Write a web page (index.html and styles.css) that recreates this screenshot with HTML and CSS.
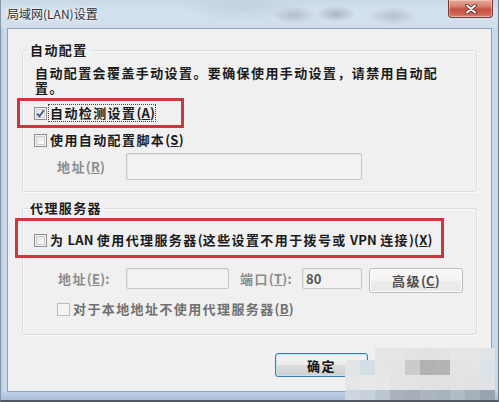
FILE: index.html
```html
<!DOCTYPE html>
<html lang="zh-CN">
<head>
<meta charset="utf-8">
<title>局域网(LAN)设置</title>
<link rel="stylesheet" href="styles.css">
</head>
<body>
<div class="window">
  <div class="titlebar">
    <span class="title">局域网(LAN)设置</span>
    <span class="close">
      <svg width="12" height="10" viewBox="0 0 12 10">
        <path d="M2 1.5 L10 8.5 M10 1.5 L2 8.5" stroke="#4a2a26" stroke-width="3.6" stroke-linecap="round"/>
        <path d="M2 1.5 L10 8.5 M10 1.5 L2 8.5" stroke="#ffffff" stroke-width="2" stroke-linecap="round"/>
      </svg>
    </span>
  </div>
  <div class="client">
    <fieldset class="group group-auto">
      <legend>自动配置</legend>
      <p class="desc">自动配置会覆盖手动设置。要确保使用手动设置，请禁用自动配置。</p>
      <div class="check-row row-detect">
        <span class="cb">
          <svg class="tick" width="9" height="9" viewBox="0 0 9 9">
            <path d="M1.2 4.6 L3.5 7.2 L7.8 1.4" fill="none" stroke="#3e5a96" stroke-width="1.8"/>
          </svg>
        </span>
        <span class="label focus">自动检测设置<span class="lat">(<u>A</u>)</span></span>
      </div>
      <div class="check-row row-script">
        <span class="cb"></span>
        <span class="label">使用自动配置脚本<span class="lat">(<u>S</u>)</span></span>
      </div>
      <div class="field-row row-script-addr">
        <span class="field-label disabled lbl-script">地址<span class="lat">(<u>R</u>)</span></span>
        <span class="textbox tb-script"></span>
      </div>
    </fieldset>
    <fieldset class="group group-proxy">
      <legend>代理服务器</legend>
      <div class="check-row row-proxy">
        <span class="cb"></span>
        <span class="label">为<span class="lat"> LAN </span>使用代理服务器<span class="lat">(</span>这些设置不用于拨号或<span class="lat"> VPN </span>连接<span class="lat">)(<u>X</u>)</span></span>
      </div>
      <div class="field-row row-proxy-addr">
        <span class="field-label disabled lbl-addr">地址<span class="lat">(<u>E</u>):</span></span>
        <span class="textbox tb-addr"></span>
        <span class="field-label disabled lbl-port">端口<span class="lat">(<u>T</u>):</span></span>
        <span class="textbox tb-port">80</span>
        <button class="btn btn-adv">高级<span class="lat">(<u>C</u>)</span></button>
      </div>
      <div class="check-row row-bypass">
        <span class="cb cb-disabled"></span>
        <span class="label label-disabled">对于本地地址不使用代理服务器<span class="lat">(<u>B</u>)</span></span>
      </div>
    </fieldset>
    <div class="footer">
      <button class="btn btn-ok">确定</button>
    </div>
  </div>
  <div class="mark mark-detect"></div>
  <div class="mark mark-proxy"></div>
  <div class="mosaic">
    <div class="mrow mrow-1"></div>
    <div class="mrow mrow-2"></div>
    <div class="mrow mrow-3"></div>
    <div class="mrow mrow-4"></div>
  </div>
</div>
</body>
</html>
```

FILE: styles.css
```css
* { box-sizing: border-box; }

html, body {
  margin: 0;
  padding: 0;
  background: #c3d6ea;
}

body {
  font-family: "Noto Sans CJK SC", "Noto Sans", sans-serif;
  font-size: 13px;
  color: #1b1b1b;
}

.window {
  position: relative;
  width: 499px;
  height: 402px;
  overflow: hidden;
  display: flex;
  flex-direction: column;
  border-left: 1px solid #8797a8;
  border-right: 1px solid #6f8093;
  border-bottom: 2px solid #4f5863;
  background:
    linear-gradient(to bottom, rgba(255,255,255,0) 0, rgba(255,255,255,0) 392px, #bcd0e6 392px, #a9bfd8 400px),
    linear-gradient(to right, #b6cbe2 0, #c7daee 3px, #c5d8ec 100%);
}

/* ---------- title bar ---------- */
.titlebar {
  height: 28px;
  flex: none;
  display: flex;
  align-items: flex-start;
  background:
    radial-gradient(ellipse 22px 9px at 293px 15px, rgba(150,160,172,0.55), rgba(150,160,172,0)),
    radial-gradient(ellipse 20px 8px at 335px 14px, rgba(140,150,162,0.6), rgba(140,150,162,0)),
    radial-gradient(ellipse 24px 9px at 392px 16px, rgba(150,160,170,0.5), rgba(150,160,170,0)),
    radial-gradient(ellipse 60px 14px at 240px 8px, rgba(170,185,200,0.35), rgba(170,185,200,0)),
    linear-gradient(to bottom, #c9d8e7 0, #d4e1ee 40%, #d0deec 100%);
}

.title {
  margin: 6px 0 0 6px;
  font-size: 12px;
  line-height: 16px;
  color: #2e2e2e;
  text-shadow: 0 0 5px rgba(255,255,255,0.95), 0 0 2px rgba(255,255,255,0.9);
}

.close {
  margin-left: auto;
  margin-right: 5px;
  width: 45px;
  height: 18px;
  display: flex;
  align-items: center;
  justify-content: center;
  border: 1px solid #7a3a32;
  border-top: none;
  border-radius: 0 0 4px 4px;
  background: linear-gradient(to bottom, #e9a896 0, #d98574 35%, #c7503f 55%, #cc6552 85%, #dc9482 100%);
  box-shadow: inset 0 0 0 1px rgba(255,255,255,0.35);
}

/* ---------- client area ---------- */
.client {
  flex: none;
  height: 364px;
  margin: 0 6px;
  border: 1px solid #8ea3b8;
  background: #f0f0f0;
  padding: 13px 14px 0 14px;
  display: flex;
  flex-direction: column;
}

.group {
  margin: 0;
  min-width: 0;
  border: 1px solid #d5dfe5;
  border-radius: 3px;
  box-shadow: inset 1px 1px 0 #fbfbfb, 1px 1px 0 #fbfbfb;
  padding: 7px 11px 11px 11px;
}

.group legend {
  margin-left: -6px;
  padding: 0 2px;
  line-height: 16px;
  font-weight: bold;
  letter-spacing: 1.4px;
}

.group-proxy {
  margin-top: 8px;
  padding: 13px 11px 14px 11px;
}

.desc {
  margin: 0 0 0 1px;
  width: 412px;
  line-height: 15px;
  font-weight: bold;
  letter-spacing: 1.4px;
}

.lat {
  letter-spacing: 0.2px;
}

.check-row {
  height: 22px;
  display: flex;
  align-items: center;
}

.row-detect { margin-top: 7px; }
.row-script { margin-top: 5px; }

.cb {
  flex: none;
  width: 13px;
  height: 13px;
  border: 1px solid #8e8f8f;
  background: linear-gradient(135deg, #dcdcdc 0, #f5f5f5 60%, #ffffff 100%);
  box-shadow: inset 0 0 0 1px #f4f4f4, inset 0 0 0 2px #c9cdd1;
  display: flex;
  align-items: center;
  justify-content: center;
}

.cb-disabled {
  border-color: #bcbcbc;
  background: #f4f4f4;
  box-shadow: inset 0 0 0 1px #f7f7f7;
}

.label {
  margin-left: 3px;
  line-height: 16px;
  font-weight: bold;
  letter-spacing: 1.4px;
  white-space: nowrap;
}

.label.focus {
  margin-left: 1px;
  padding: 0 0 0 1px;
  border: 1px dotted #444;
}

.label-disabled {
  color: #707070;
}

.field-row {
  display: flex;
  align-items: flex-start;
}

.row-script-addr {
  margin-top: 2px;
}

.field-label {
  flex: none;
  line-height: 21px;
  font-weight: bold;
  letter-spacing: 1.4px;
  white-space: nowrap;
}

.disabled {
  color: #8c8c8c;
}

.lbl-script {
  margin-left: 23px;
  width: 69px;
  line-height: 27px;
}

.textbox {
  flex: none;
  height: 21px;
  border: 1px solid #c5c8cb;
  border-radius: 2px;
  background: #f2f2f2;
  box-shadow: inset 1px 1px 0 #e4e4e4;
}

.tb-script {
  width: 236px;
  height: 27px;
}

.row-proxy-addr {
  margin-top: 17px;
}

.lbl-addr {
  margin-left: 24px;
  width: 68px;
}

.tb-addr {
  width: 103px;
}

.lbl-port {
  margin-left: 11px;
  width: 62px;
}

.tb-port {
  width: 60px;
  padding-left: 3px;
  line-height: 19px;
  font-weight: bold;
  color: #555;
}

.btn {
  font-family: "Noto Sans CJK SC", "Noto Sans", sans-serif;
  font-size: 13px;
  font-weight: bold;
  letter-spacing: 1.4px;
  padding: 0;
  border-radius: 3px;
}

.btn-adv {
  margin-left: 7px;
  width: 94px;
  height: 25px;
  color: #4f4f4f;
  border: 1px solid #bdbdbd;
  background: linear-gradient(to bottom, #f8f8f8 0, #f3f3f3 50%, #ececec 51%, #e8e8e8 100%);
  box-shadow: inset 0 0 0 1px #fcfcfc;
}

.row-bypass {
  margin-top: 5px;
  padding-left: 23px;
}

.footer {
  margin-top: 18px;
  display: flex;
  padding-left: 253px;
}

.btn-ok {
  width: 93px;
  height: 24px;
  color: #111;
  border: 1px solid #3c7fb1;
  background: linear-gradient(to bottom, #f4f4f4 0, #ececec 48%, #dcdcdc 52%, #cfcfcf 100%);
  box-shadow: inset 0 0 0 1px #bfe2f8;
}

/* ---------- red annotation boxes (overlay) ---------- */
.mark {
  position: absolute;
  border: 3px solid #c63a3e;
}

.mark-detect {
  left: 16px;
  top: 98px;
  width: 167px;
  height: 30px;
}

.mark-proxy {
  left: 14px;
  top: 218px;
  width: 429px;
  height: 40px;
}

/* ---------- mosaic watermark (overlay) ---------- */
.mosaic {
  position: absolute;
  left: 344px;
  top: 348px;
  width: 150px;
  height: 54px;
  border-top-left-radius: 26px 22px;
  overflow: hidden;
  display: flex;
  flex-direction: column;
}

.mrow { flex: none; }

.mrow-1 {
  height: 12px;
  background: linear-gradient(to right,
    rgba(240,240,240,0) 0 30px, #e6e6e6 30px 45px, #e5e5e5 45px 60px, #e3e3e3 60px 75px,
    #e2e2e2 75px 90px, #e3e3e3 90px 105px, #e6e6e6 105px 120px, #e5e5e5 120px 135px, #dfe4e9 135px 150px);
}

.mrow-2 {
  height: 15px;
  background: linear-gradient(to right,
    #e2e5e8 0 15px, #d4dee5 15px 30px, #e5e5e5 30px 45px, #e4e4e4 45px 60px, #cbcbcb 60px 75px,
    #b2b2b2 75px 90px, #b4b4b4 90px 105px, #e3e3e3 105px 120px, #e5e5e5 120px 135px, #dbe2e8 135px 150px);
}

.mrow-3 {
  height: 15px;
  background: linear-gradient(to right,
    #e4e6e8 0 15px, #e8e8e8 15px 30px, #e7e7e7 30px 45px, #e4e4e4 45px 60px, #e3e3e3 60px 75px,
    #e2e2e2 75px 90px, #e2e2e2 90px 105px, #e3e3e3 105px 120px, #e2e2e2 120px 135px, #dfe3e7 135px 150px);
}

.mrow-4 {
  height: 12px;
  background: linear-gradient(to right,
    #cdd6df 0 15px, #c6d1db 15px 30px, #bcc6d0 30px 45px, #a9b1b9 45px 60px, #a5aeb7 60px 75px,
    #adb6bf 75px 90px, #a9b3bd 90px 105px, #b2bcc6 105px 120px, #a6b0bb 120px 135px, #9aa4ae 135px 150px);
}
```
